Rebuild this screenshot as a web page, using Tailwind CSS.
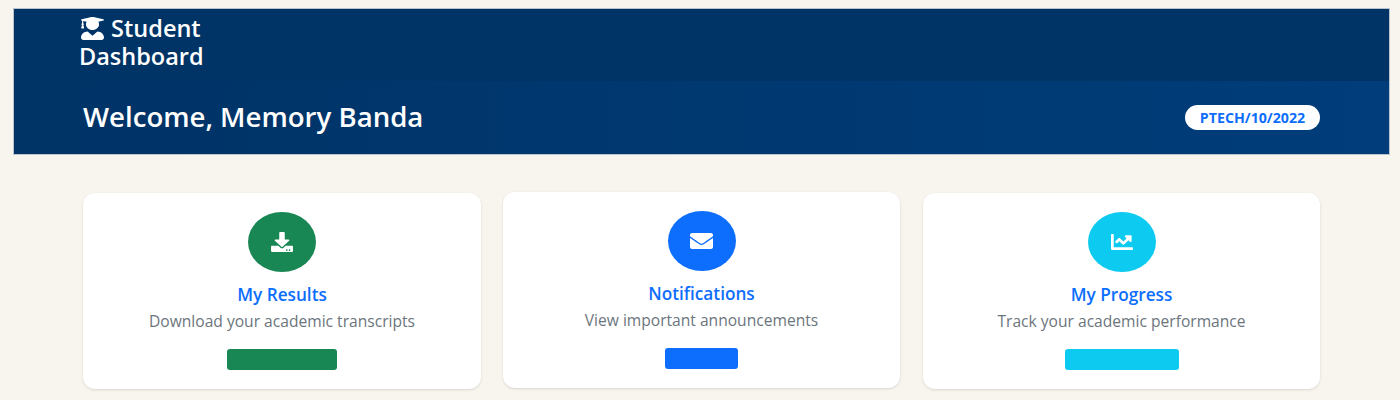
<!DOCTYPE html>
<html lang="en">
<head>
  <meta charset="UTF-8" />
  <meta name="viewport" content="width=device-width, initial-scale=1.0"/>
  <title>Student Dashboard</title>
  <script src="https://cdn.jsdelivr.net/npm/@tailwindcss/browser@4"></script>
</head>
<body class="bg-[#f8f5ef] h-[400px] overflow-hidden pt-[9px] font-['Open_Sans',sans-serif]">

  <!-- Header -->
  <header class="ml-[14px] mr-[11px] ring-1 ring-[#003366]/25">
    <nav class="h-[72px] bg-[#003366] pl-[65px] pt-[5px]">
      <div class="w-[132px] text-[23.5px] leading-[28px] font-semibold text-white">
        <svg class="inline-block w-[23px] h-[23px] align-[-3px] mr-[1px] ml-[2px] fill-white" viewBox="0 0 448 512" preserveAspectRatio="none"><path d="M319.4 320.6L224 416l-95.4-95.4C57.1 323.7 0 382.2 0 454.4v9.6c0 26.5 21.5 48 48 48h352c26.5 0 48-21.5 48-48v-9.6c0-72.2-57.1-130.7-128.6-133.8zM13.6 79.8l6.4 1.5v58.4c-7 4.2-12 11.5-12 20.3 0 8.4 4.6 15.4 11.1 19.7L3.5 242c-1.7 6.9 2.1 14 7.6 14h41.8c5.5 0 9.3-7.1 7.6-14l-15.6-62.3C51.4 175.4 56 168.4 56 160c0-8.8-5-16.1-12-20.3V87.1l66 15.9c-8.6 17.2-14 36.4-14 57 0 70.7 57.3 128 128 128s128-57.3 128-128c0-20.6-5.3-39.8-14-57l96.3-23.2c18.2-4.4 18.2-27.1 0-31.5l-190.4-46c-13-3.1-26.7-3.1-39.7 0L13.6 48.2c-18.1 4.4-18.1 27.2 0 31.6z"/></svg>
        Student Dashboard
      </div>
    </nav>
    <div class="h-[73px] bg-linear-to-r from-[#003366] to-[#003d7a] px-[69px] flex items-center justify-between">
      <h1 class="-mt-[1px] text-[27.6px] font-semibold text-white">Welcome, Memory Banda</h1>
      <span class="w-[135px] h-[25px] rounded-full bg-white text-[#0d6efd] text-[14.2px] font-bold flex items-center justify-center">PTECH/10/2022</span>
    </div>
  </header>

  <!-- Cards -->
  <main class="ml-[83px] mt-[38px] grid grid-cols-[398px_397px_398px] gap-[22px] items-start">
    <div class="mt-[1px] h-[196px] bg-white rounded-xl shadow-sm pt-[19px] flex flex-col items-center">
      <div class="w-[68px] h-[60px] rounded-[50%] bg-[#198754] flex items-center justify-center">
        <svg class="w-[22px] h-[20px] fill-white" viewBox="0 0 512 512" preserveAspectRatio="none"><path d="M216 0h80c13.3 0 24 10.7 24 24v168h87.7c17.8 0 26.7 21.5 14.1 34.1L269.7 378.3c-7.5 7.5-19.8 7.5-27.3 0L90.1 226.1c-12.6-12.6-3.7-34.1 14.1-34.1H192V24c0-13.3 10.7-24 24-24zm296 376v112c0 13.3-10.7 24-24 24H24c-13.3 0-24-10.7-24-24V376c0-13.3 10.7-24 24-24h146.7l49 49c20.1 20.1 52.5 20.1 72.6 0l49-49H488c13.3 0 24 10.7 24 24zm-124 88c0-11-9-20-20-20s-20 9-20 20 9 20 20 20 20-9 20-20zm64 0c0-11-9-20-20-20s-20 9-20 20 9 20 20 20 20-9 20-20z"/></svg>
      </div>
      <h2 class="mt-[11px] text-[17.2px] leading-[24px] font-semibold text-[#0d6efd]">My Results</h2>
      <p class="mt-[2px] text-[15.6px] leading-[24px] text-[#6c757d]">Download your academic transcripts</p>
      <button class="mt-[16px] w-[110px] h-[21px] rounded-[3px] bg-[#198754]"></button>
    </div>

    <div class="h-[196px] bg-white rounded-xl shadow-sm pt-[19px] flex flex-col items-center">
      <div class="w-[68px] h-[60px] rounded-[50%] bg-[#0d6efd] flex items-center justify-center">
        <svg class="w-[23px] h-[16px] fill-white" viewBox="0 64 512 384" preserveAspectRatio="none"><path d="M502.3 190.8c3.9-3.1 9.7-.2 9.7 4.7V400c0 26.5-21.5 48-48 48H48c-26.5 0-48-21.5-48-48V195.6c0-5 5.7-7.8 9.7-4.7 22.4 17.4 52.1 39.5 154.1 113.6 21.1 15.4 56.7 47.8 92.2 47.6 35.7.3 72-32.8 92.3-47.6 102-74.1 131.6-96.3 154-113.7zM256 320c23.2.4 56.6-29.2 73.4-41.4 132.7-96.3 142.8-104.7 173.4-128.7 5.8-4.5 9.2-11.5 9.2-18.9v-19c0-26.5-21.5-48-48-48H48C21.5 64 0 85.5 0 112v19c0 7.4 3.4 14.3 9.2 18.9 30.6 23.9 40.7 32.4 173.4 128.7 16.8 12.2 50.2 41.8 73.4 41.4z"/></svg>
      </div>
      <h2 class="mt-[11px] text-[17.2px] leading-[24px] font-semibold text-[#0d6efd]">Notifications</h2>
      <p class="mt-[2px] text-[15.6px] leading-[24px] text-[#6c757d]">View important announcements</p>
      <button class="mt-[16px] w-[73px] h-[21px] rounded-[3px] bg-[#0d6efd]"></button>
    </div>

    <div class="mt-[1px] ml-[1px] h-[196px] bg-white rounded-xl shadow-sm pt-[19px] flex flex-col items-center">
      <div class="w-[68px] h-[60px] rounded-[50%] bg-[#0dcaf0] flex items-center justify-center">
        <svg class="w-[22px] h-[16px] fill-white" viewBox="0 64 512 384" preserveAspectRatio="none"><path d="M496 384H64V80c0-8.84-7.16-16-16-16H16C7.16 64 0 71.16 0 80v336c0 17.67 14.33 32 32 32h464c8.84 0 16-7.16 16-16v-32c0-8.84-7.16-16-16-16zM464 96H345.94c-21.38 0-32.09 25.85-16.97 40.97l32.4 32.4L288 242.75l-73.37-73.37c-12.5-12.5-32.76-12.5-45.25 0l-68.69 68.69c-6.25 6.25-6.25 16.38 0 22.63l22.62 22.62c6.25 6.25 16.38 6.25 22.63 0L192 237.25l73.37 73.37c12.5 12.5 32.76 12.5 45.25 0l96-96 32.4 32.4c15.12 15.12 40.97 4.41 40.97-16.97V112c0-8.84-7.16-16-16-16z"/></svg>
      </div>
      <h2 class="mt-[11px] text-[17.2px] leading-[24px] font-semibold text-[#0d6efd]">My Progress</h2>
      <p class="mt-[2px] text-[15.6px] leading-[24px] text-[#6c757d]">Track your academic performance</p>
      <button class="mt-[16px] w-[114px] h-[21px] rounded-[3px] bg-[#0dcaf0]"></button>
    </div>
  </main>

</body>
</html>
